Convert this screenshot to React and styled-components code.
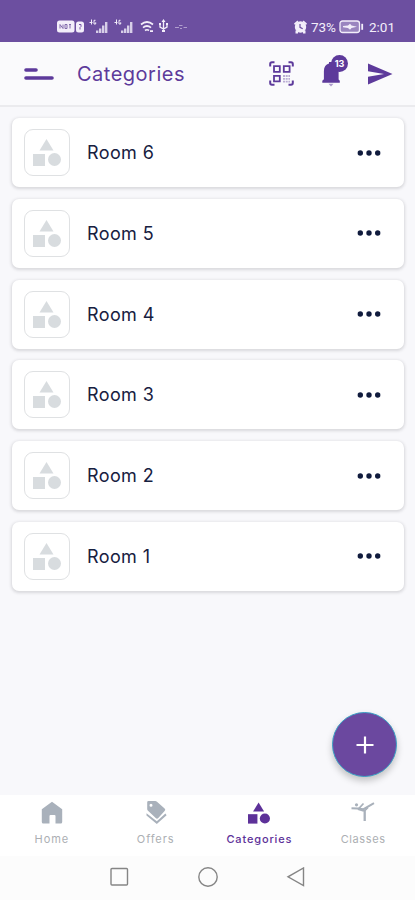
import React from 'react';
import styled, { createGlobalStyle } from 'styled-components';

const GlobalStyle = createGlobalStyle`
	body {
		margin: 0;
		background: #f8f8fb;
		font-family: 'Inter', 'Lato', sans-serif;
	}
`;
const Screen = styled.div`
	height: 900px;
	display: flex;
	flex-direction: column;
	position: relative;
	overflow: hidden;
`;
const StatusBar = styled.div`
	height: 42px;
	box-sizing: border-box;
	padding: 11px 19px 0 57px;
	display: flex;
	justify-content: space-between;
	align-items: center;
	flex-shrink: 0;
	background: #6c4fa0;
	color: #f3eefa;
`;
const StatusRight = styled.div`
	display: flex;
	align-items: center;
	font-family: 'Roboto', sans-serif;
	font-size: 13.5px;
	line-height: 16px;
`;
const Percent = styled.span`
	margin-left: 4px;
	width: 27px;
	letter-spacing: -0.1px;
`;
const Clock = styled.span`
	margin-left: 5px;
	width: 27px;
	white-space: nowrap;
`;
const Header = styled.header`
	height: 65px;
	box-sizing: border-box;
	flex-shrink: 0;
	display: flex;
	align-items: center;
	padding: 0 22px 0 24px;
	background: #fafafc;
	border-bottom: 2px solid #ebebee;
	color: #5d3a9b;
`;
const HeaderTitle = styled.h1`
	flex: 1;
	margin: 1px 0 0 23px;
	font-size: 20px;
	line-height: 24px;
	font-weight: 400;
	letter-spacing: 0.5px;
`;
const HeaderActions = styled.div`
	display: flex;
	align-items: center;
`;
const BellWrap = styled.div`
	position: relative;
	width: 20px;
	height: 26px;
	margin: 0 26px 0 27px;
`;
const BellBadge = styled.span`
	position: absolute;
	top: -6px;
	right: -7px;
	width: 17px;
	height: 17px;
	border-radius: 50%;
	background: #5d3a9b;
	color: #fff;
	font-size: 9px;
	font-weight: 700;
	line-height: 17px;
	text-align: center;
`;
const RoomList = styled.main`
	flex: 1;
	display: flex;
	flex-direction: column;
	gap: 11.8px;
	padding: 11px 11px 0 12px;
`;
const RoomCard = styled.div`
	height: 69px;
	box-sizing: border-box;
	padding: 0 23px 0 12px;
	display: flex;
	align-items: center;
	border-radius: 7px;
	background: #fff;
	box-shadow: 0 1px 3px 1px rgba(40, 40, 50, 0.15);
`;
const RoomThumb = styled.div`
	width: 46px;
	height: 47px;
	box-sizing: border-box;
	display: flex;
	align-items: center;
	justify-content: center;
	border: 1px solid #dfe1e3;
	border-radius: 9px;
	color: #d8dcdf;
`;
const RoomName = styled.div`
	flex: 1;
	margin: 1px 0 0 17px;
	font-size: 18px;
	line-height: 22px;
	letter-spacing: 0.4px;
	color: #17203f;
`;
const AddButton = styled.button`
	position: absolute;
	right: 18px;
	bottom: 123px;
	width: 65px;
	height: 65px;
	padding: 0;
	border: 1.5px solid #3b9fc4;
	border-radius: 50%;
	background: #6b489f;
	display: flex;
	align-items: center;
	justify-content: center;
	box-shadow: 0 4px 7px rgba(0, 0, 0, 0.22);
`;
const TabBar = styled.nav`
	height: 61px;
	flex-shrink: 0;
	display: grid;
	grid-template-columns: repeat(4, 1fr);
	background: #fff;
`;
const Tab = styled.div`
	display: flex;
	flex-direction: column;
	align-items: center;
	padding-top: 6px;
	color: ${({ $active }) => ($active ? '#5d3199' : '#a9b1bb')};
`;
const TabLabel = styled.span`
	margin-top: 6px;
	font-size: 11px;
	line-height: 16px;
	font-weight: ${({ $active }) => ($active ? 500 : 400)};
	letter-spacing: ${({ $spacing }) => $spacing}px;
	color: ${({ $active }) => ($active ? '#5d3199' : '#acafb3')};
`;
const SystemNav = styled.div`
	height: 44px;
	box-sizing: border-box;
	padding-bottom: 2px;
	flex-shrink: 0;
	display: flex;
	align-items: center;
	justify-content: center;
	gap: 68px;
	background: #fcfcfc;
`;

const StatusIcons = () => (
	<svg width="134" height="16" viewBox="0 0 134 16" fill="currentColor">
		<rect x="0" y="1.5" width="17.5" height="12" rx="2.5" />
		<path
			d="M3 5.5v4M3 5.5l3 4v-4M8 5.5h2v4H8zM12 5.5h2M13 5.5v4"
			fill="none"
			stroke="#8069ab"
			strokeWidth="1"
		/>
		<rect x="19" y="2.5" width="8" height="11" rx="2.5" />
		<path d="M22 5.5h2v2l-1 1v2" fill="none" stroke="#7556a6" />
		{[32, 57].map((x) => (
			<g key={x} transform={`translate(${x} -.5)`}>
				<path d="M2.5 1v5M.5 4h3M6.5 1.8H5V5.5h1.7V3.8" fill="none" stroke="currentColor" />
				<path d="M7 12h2.4v2.5H7zM10 10h2.4v4.5H10zM13 7h2.4v7.5H13zM16 3.5h2.4v11H16z" opacity=".8" />
			</g>
		))}
		<g fill="none" stroke="currentColor" strokeWidth="1.7">
			<path d="M84 5.5q6-5 12 0M86 8.7q4-3.4 8 0" />
			<path d="M88 11.5q2-1.5 4 0M93 12.2h3" />
		</g>
		<path d="M106.5 2v10M103 5v3l3.5 2 3.5-2V5" fill="none" stroke="currentColor" strokeWidth="1.3" />
		<path d="M106.5 0l2 3h-4zM105 11h3v2h-3zM102 4h2v2h-2zM109 4h2v2h-2z" />
		<path d="M118 8h4v1h-4zM126.5 8h3.5v1h-3.5zM122 6h3.5v1H122zM123 9h2v1h-2z" opacity=".5" />
	</svg>
);

const AlarmIcon = () => (
	<svg width="13" height="14" viewBox="0 0 13 14" fill="currentColor">
		<circle cx="6.5" cy="7" r="5.7" />
		<path d="M0 3.5L3.5.5l1 1.5L1 5zM13 3.5L9.5.5l-1 1.5L12 5zM1.5 10.5H4v3H1.5zM9 10.5h2.5v3H9z" />
		<path d="M6 4v3.3l2.7 1.5" fill="none" stroke="#6c4fa0" strokeWidth="1.2" />
	</svg>
);

const BatteryIcon = () => (
	<svg width="26" height="14" viewBox="0 0 26 14">
		<rect x="2" y="1" width="19.5" height="11.5" rx="2.5" fill="#9a85bf" stroke="currentColor" strokeWidth="1.3" />
		<path d="M5 6l5-.6 2-1.7 1.5 1.8L19 6.7l-5.5 1.2-1.5 1.8-2-1.8-5-.6z" fill="currentColor" />
		<path d="M24.2 3.8v6" stroke="currentColor" strokeWidth="1.8" />
	</svg>
);

const MenuIcon = () => (
	<svg width="30" height="14" viewBox="0 0 30 14" stroke="currentColor" strokeWidth="3.6" strokeLinecap="round">
		<path d="M2 3h10M2 11h26" />
	</svg>
);

const ScanIcon = () => (
	<svg width="25" height="25" viewBox="0 0 25 25" fill="none" stroke="currentColor">
		<path
			d="M1.2 5.5V3q0-1.8 1.8-1.8h2.5M19.5 1.2H22q1.8 0 1.8 1.8v2.5M23.8 19.5V22q0 1.8-1.8 1.8h-2.5M5.5 23.8H3q-1.8 0-1.8-1.8v-2.5"
			strokeWidth="2"
		/>
		<path d="M5 5.2h5.8v5.6H5zM14.8 5.2h5.8v5.6h-5.8zM5 14.8h5.8v5.6H5z" strokeWidth="1.8" />
		<path d="M14 15h7M14 17.8h7M14 20.6h7" strokeWidth="1.8" strokeDasharray="2 .7" opacity=".4" />
	</svg>
);

const BellIcon = () => (
	<svg width="20" height="26" viewBox="0 0 20 26" fill="currentColor">
		<path d="M8 1h6v2c2.5 1 3.6 3 3.6 6v9.5l1.2 1.2v2H1.3v-2l1.6-1.4V10c0-4 1.9-6.4 5.1-7.4z" />
		<path d="M7.5 22.8h5L10 25.5z" opacity=".5" />
	</svg>
);

const SendIcon = () => (
	<svg width="26" height="22" viewBox="0 0 26 22" fill="currentColor">
		<path d="M1 .5L25.5 11 1 21.5v-7.7L17 11 1 8.2z" />
	</svg>
);

const ShapesIcon = ({ width, height }) => (
	<svg width={width} height={height} viewBox="0 0 28 27" fill="currentColor">
		<path d="M13.5 0l7 11.5h-14z" />
		<path d="M0 15h12v12H0z" />
		<circle cx="21.5" cy="20.5" r="6.5" />
	</svg>
);

const DotsIcon = () => (
	<svg width="24" height="6" viewBox="0 0 24 6" fill="#101b3d">
		<circle cx="3.3" cy="3" r="2.7" />
		<circle cx="12" cy="3" r="2.7" />
		<circle cx="20.7" cy="3" r="2.7" />
	</svg>
);

const HomeIcon = () => (
	<svg width="22" height="24" viewBox="0 0 22 24" fill="currentColor">
		<path d="M.8 8.3L11 .8l10.2 7.5V21q0 1.5-1.5 1.5h-5.2V15q0-1-1-1h-4q-1 0-1 1v7.5H2.3Q.8 22.5.8 21z" />
	</svg>
);

const OffersIcon = () => (
	<svg width="22" height="24" viewBox="0 0 22 24" fill="currentColor">
		<path
			fillRule="evenodd"
			d="M3.5 0h6.7q1 0 1.8.7l7.6 6.8q1.4 1.3 0 2.6l-6.3 7q-1.3 1.2-2.6 0L3 9.8q-.8-.8-.8-1.8V1.3Q2.2 0 3.5 0zM6 2.7a1.5 1.5 0 1 0 0 3 1.5 1.5 0 0 0 0-3z"
		/>
		<path d="M1.5 12.2l10.3 8 8.6-7.7 1.2 1.7-9.8 8.9L1.5 14.5z" />
	</svg>
);

const ClassesIcon = () => (
	<svg width="24" height="24" viewBox="0 0 24 24" fill="none" stroke="currentColor">
		<path d="M.5 7.3l6 .3 6 .6L23 2.2" strokeWidth="2" />
		<path d="M7 7.8l6.7 2V20" strokeWidth="2.3" />
		<path d="M7.5 7.8L12.5 2.5M14 9.5l3-3" strokeWidth="1.7" />
		<circle cx="5.5" cy="3.8" r="1.6" fill="currentColor" stroke="none" />
	</svg>
);

const rooms = ['Room 6', 'Room 5', 'Room 4', 'Room 3', 'Room 2', 'Room 1'];

const tabs = [
	{ label: 'Home', icon: <HomeIcon />, spacing: 1 },
	{ label: 'Offers', icon: <OffersIcon />, spacing: 0.9 },
	{ label: 'Categories', icon: <ShapesIcon width={22} height={24} />, spacing: 0.85, active: true },
	{ label: 'Classes', icon: <ClassesIcon />, spacing: 0.6 },
];

const App = () => {
	return (
		<Screen>
			<GlobalStyle />
			<StatusBar>
				<StatusIcons />
				<StatusRight>
					<AlarmIcon />
					<Percent>73%</Percent>
					<BatteryIcon />
					<Clock>2:01</Clock>
				</StatusRight>
			</StatusBar>
			<Header>
				<MenuIcon />
				<HeaderTitle>Categories</HeaderTitle>
				<HeaderActions>
					<ScanIcon />
					<BellWrap>
						<BellIcon />
						<BellBadge>13</BellBadge>
					</BellWrap>
					<SendIcon />
				</HeaderActions>
			</Header>
			<RoomList>
				{rooms.map((room) => (
					<RoomCard key={room}>
						<RoomThumb>
							<ShapesIcon width={28} height={27} />
						</RoomThumb>
						<RoomName>{room}</RoomName>
						<DotsIcon />
					</RoomCard>
				))}
			</RoomList>
			<TabBar>
				{tabs.map(({ label, icon, spacing, active }) => (
					<Tab key={label} $active={active}>
						{icon}
						<TabLabel $active={active} $spacing={spacing}>
							{label}
						</TabLabel>
					</Tab>
				))}
			</TabBar>
			<SystemNav>
				<svg width="20" height="20" fill="none" stroke="#858585" strokeWidth="1.4">
					<rect x="1" y="1.5" width="16.5" height="16.5" rx="1" />
				</svg>
				<svg width="20" height="20" fill="none" stroke="#858585" strokeWidth="1.4">
					<circle cx="10" cy="10" r="9.2" />
				</svg>
				<svg width="20" height="20" fill="none" stroke="#858585" strokeWidth="1.4">
					<path d="M17.5 1v17.5L2 9.8z" />
				</svg>
			</SystemNav>
			<AddButton aria-label="Add">
				<svg width="18" height="18" stroke="#fff" strokeWidth="2.2">
					<path d="M9 .5v17M.5 9h17" />
				</svg>
			</AddButton>
		</Screen>
	);
};

export default App;
